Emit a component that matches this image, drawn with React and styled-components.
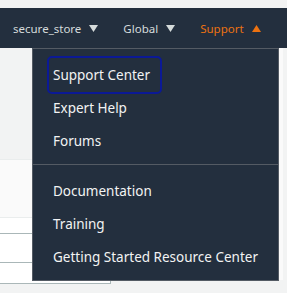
import React from "react";
import styled, { createGlobalStyle } from "styled-components";

const GlobalStyle = createGlobalStyle`
  html, body { margin: 0; padding: 0; }
  body {
    background: #f2f3f3;
    font-family: "Noto Sans", "Open Sans", Arial, sans-serif;
    -webkit-font-smoothing: antialiased;
  }
  * { box-sizing: border-box; }
`;

const Page = styled.div`
  width: 287px;
  height: 293px;
  padding-top: 8px;
  overflow: hidden;
  background: #f2f3f3;
`;

const Nav = styled.nav`
  position: relative;
  height: 40px;
  background: #232f3e;
  display: flex;
  align-items: center;
  padding-left: 13px;
  gap: 25px;
`;

const NavItem = styled.div`
  display: flex;
  align-items: center;
  gap: 8px;
  font-size: 11.5px;
  color: ${(p) => (p.$active ? "#ec7211" : "#d5dbdb")};
  white-space: nowrap;
`;

const Caret = ({ up }) => (
  <svg width="9" height="7" viewBox="0 0 9 7" style={{ display: "block" }}>
    {up ? <path d="M4.5 0 L9 7 H0 Z" fill="currentColor" /> : <path d="M0 0 H9 L4.5 7 Z" fill="currentColor" />}
  </svg>
);

const Dropdown = styled.div`
  position: absolute;
  top: 100%;
  right: 8px;
  width: 247px;
  background: #232f3e;
  border: 1px solid #545b64;
  z-index: 10;
`;

const Section = styled.ul`
  list-style: none;
  margin: 0;
  padding: 9px 0 7px 17px;
  & + & {
    border-top: 1px solid #545b64;
  }
`;

const Item = styled.li`
  height: 33px;
  display: flex;
  align-items: center;
`;

const ItemLink = styled.a`
  display: inline-block;
  line-height: 32px;
  padding: 0 9px 0 3px;
  font-size: 13.5px;
  color: #f2f3f3;
  text-decoration: none;
  border-radius: 2px;
  outline: ${(p) => (p.$focused ? "2px solid #0b1996" : "none")};
  outline-offset: 1px;
`;

const Main = styled.div`
  display: flex;
  height: 245px;
`;

const LeftCol = styled.div`
  width: 111px;
  display: flex;
  flex-direction: column;
`;

const Spacer = styled.div`
  height: ${(p) => p.$h}px;
`;

const Table = styled.div`
  background: #fff;
  border-top: 1px solid #eaeded;
  border-right: 1px solid #aab7b8;
  border-bottom: 1px solid #aab7b8;
`;

const TableHead = styled.div`
  height: 58px;
  background: #fafafa;
  border-bottom: 1px solid #eaeded;
`;

const TableRow = styled.div`
  height: ${(p) => p.$h}px;
  border-bottom: ${(p) => (p.$last ? "none" : "1px solid #aab7b8")};
`;

const Card = styled.div`
  margin-left: auto;
  margin-right: 4px;
  width: 80px;
  height: 232px;
  background: #fafafa;
`;

const sections = [
  ["Support Center", "Expert Help", "Forums"],
  ["Documentation", "Training", "Getting Started Resource Center"],
];

export default function App() {
  return (
    <>
      <GlobalStyle />
      <Page>
        <Nav>
          <NavItem>
            <span>secure_store</span>
            <Caret />
          </NavItem>
          <NavItem>
            <span>Global</span>
            <Caret />
          </NavItem>
          <NavItem $active>
            <span>Support</span>
            <Caret up />
          </NavItem>
          <Dropdown>
            {sections.map((items, si) => (
              <Section key={si}>
                {items.map((label, i) => (
                  <Item key={label}>
                    <ItemLink href="#" $focused={si === 0 && i === 0}>
                      {label}
                    </ItemLink>
                  </Item>
                ))}
              </Section>
            ))}
          </Dropdown>
        </Nav>
        <Main>
          <LeftCol>
            <Spacer $h={111} />
            <Table>
              <TableHead />
              <TableRow $h={16} />
              <TableRow $h={29} />
              <TableRow $h={20} $last />
            </Table>
          </LeftCol>
          <Card />
        </Main>
      </Page>
    </>
  );
}
